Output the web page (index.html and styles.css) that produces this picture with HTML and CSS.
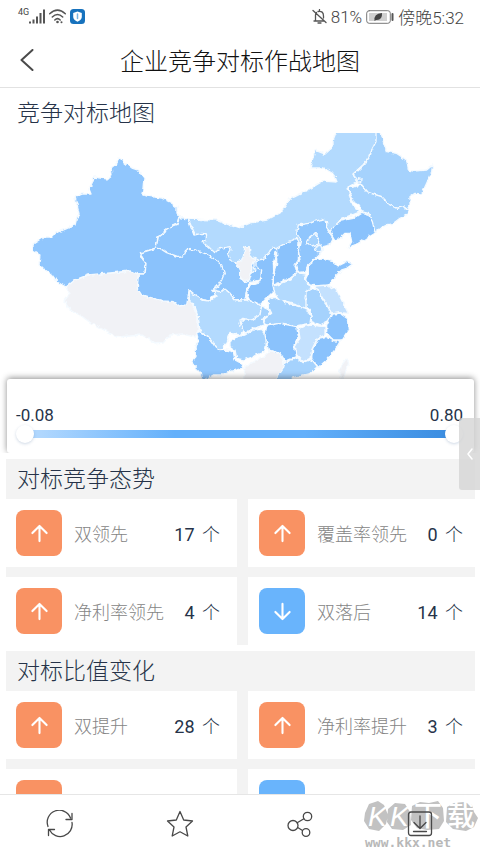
FILE: index.html
```html
<!DOCTYPE html>
<html lang="zh-CN">
<head>
<meta charset="utf-8">
<meta name="viewport" content="width=device-width, initial-scale=1">
<title>企业竞争对标作战地图</title>
<link rel="stylesheet" href="styles.css">
</head>
<body>
<svg class="defs" aria-hidden="true">
  <symbol id="up" viewBox="0 0 20 20"><path d="M10 18V2.500M2.500 9.500 10 2 17.500 9.500"/></symbol>
  <symbol id="down" viewBox="0 0 20 20"><path d="M10 2V17.500M2.500 10.500 10 18 17.500 10.500"/></symbol>
</svg>

<div class="status">
  <div class="status-group">
    <span class="net">4G</span>
    <svg class="signal" viewBox="0 0 16 15"><path d="M1 12.500V14.500M4.500 10.500V14.500M8 7.500V14.500M11.500 4V14.500M15 0.500V14.500"/></svg>
    <svg class="wifi" viewBox="0 0 17 15"><path d="M.7 4.800Q8.500-2.600 16.300 4.800M3.300 8Q8.500 3 13.700 8M5.800 11Q8.500 8.300 11.200 11"/><circle cx="8.500" cy="13" r="1.300"/><circle cx="12.500" cy="13.300" r="1"/></svg>
    <svg class="guard" viewBox="0 0 15 15"><rect width="15" height="15" rx="3.500" fill="#1772bd"/><path d="M7.500 2.500 11.800 4V8Q11.500 11 7.500 12.800 3.500 11 3.200 8V4Z" fill="#fff"/><path d="M7.500 5V9.500" stroke="#78b5e5" stroke-width="1.500"/></svg>
  </div>
  <div class="status-group">
    <svg class="bell" viewBox="0 0 15 15"><path d="M1 1.500 14 13.500M2 12H11.500M3.500 12V6Q3.500 4.500 4.500 3.500M6 2.500Q11.500 1.500 11.500 7V9M6 14H9M7.500 .5V2"/></svg>
    <span>81%</span>
    <svg class="battery" viewBox="0 0 28 14"><rect x=".7" y=".7" width="23.600" height="12.600" rx="2.500" fill="none" stroke="#777"/><rect x="3" y="3" width="18" height="8" fill="#d0d0d0"/><path d="M8.500 11Q7.500 3.500 16 3 16.500 10.500 10 10Z" fill="#444"/><path d="M26.500 4V10" stroke="#555" stroke-width="2"/></svg>
    <span>傍晚5:32</span>
  </div>
</div>

<header class="topbar">
  <button class="back" aria-label="返回"><svg viewBox="0 0 14 22"><path d="M12.500 1 1.500 11 12.500 21"/></svg></button>
  <h1>企业竞争对标作战地图</h1>
</header>

<main class="content">
  <section class="map-section">
    <h2 class="map-title">竞争对标地图</h2>
    <svg class="map" viewBox="0 133 480 246" role="img" aria-label="竞争对标地图">
      <filter id="coast" x="0" y="0" width="1" height="1">
        <feTurbulence type="fractalNoise" baseFrequency=".22" numOctaves="2" seed="4"/>
        <feDisplacementMap in="SourceGraphic" scale="4" xChannelSelector="R" yChannelSelector="G"/>
      </filter>
      <g filter="url(#coast)">
        <rect y="133" width="480" height="246" fill="#fff"/>
        <path class="none" d="M66 287 75 280 88 275 110 273 130 271 145 274 188 290 192 303 198 317 198 332 195 337 183 334 170 335 163 343 155 344 150 340 142 335 130 336 118 337 104 330 91 323 80 315 70 310 64 301 69 295Z"/>
        <path class="t2" d="M188 219 217 220 227 224 238 228 250 223 267 220 280 213 290 199 302 193 313 187 323 181 337 182 335 177 332 173 323 168 310 168 315 150 325 154 333 147 333 140 337 130H377V142L372 150 370 157 363 165 353 174 357 182 348 187 350 197 353 205 360 212 340 220 333 232 320 245 290 250 270 262 245 280 200 245Z"/>
        <path class="t4" d="M119 157 124 162 132 168 138 170 144 178 143 190 142 194 147 196 162 198 170 202 177 207 177 213 180 217 178 224 173 226 163 233 158 237 156 248 142 253 141 257 146 263 144 270 145 274 138 274 130 271 110 273 88 275 75 280 66 287 57 282 52 275 44 269 39 264 40 255 33 251 33 244 42 238 50 238 54 234 63 230 75 225 77 217 79 214 77 205 75 197 82 194 91 194 89 189 92 183 94 177 107 179 112 175 111 168 117 163Z"/>
        <g transform="translate(130 200) scale(.33333)">
          <path class="t4" d="M150 52 175 58 182 80 192 105 215 100 230 102 228 120 215 125 235 140 255 158 270 145 300 140 303 150 293 165 300 180 320 188 330 210 330 235 345 243 375 210 365 195 375 175 395 185 395 240 355 248 350 270 345 298 315 300 300 280 285 268 265 290 220 240 78 145 85 110 100 98 128 78 145 72Z"/>
          <path class="t5" d="M78 145 90 145 110 158 130 165 150 172 163 165 170 148 200 150 230 163 250 175 275 195 283 220 275 240 262 260 245 270 258 285 245 290 240 303 220 300 195 285 178 270 170 315 145 318 130 305 100 303 60 292 35 285 22 265 25 222 45 222 48 190 32 170 35 158Z"/>
          <path class="none" d="M345 140H358L360 165 375 180 365 200V215L358 240 342 245 330 230 328 205 315 188 335 180 342 160Z"/>
          <path class="t2" d="M178 270 195 285 220 300 240 303 258 290 250 270 270 275 285 268 300 280 315 300 345 300 370 305 395 318 390 345 365 362 340 355 330 370 340 390 330 405 300 400 290 430 270 452 255 440 235 410 210 395 205 350 195 320 178 300Z"/>
          <path class="t3" d="M395 318 420 330 415 350 395 355 405 375 370 385 345 400 335 380 330 360 365 360 390 345Z"/>
          <path class="t4" d="M200 398 210 395 235 410 255 440 270 452 290 450 310 455 315 480 330 488 340 505 300 515 280 525 250 525 225 540 215 535 210 515 190 495 185 485 198 470 195 440 205 425Z"/>
          <path class="t3" d="M300 425 320 410 345 405 370 390 395 388 410 405 408 440 405 455 370 468 340 480 320 475 315 450 300 440Z"/>
        </g>
        <g transform="translate(290 125) scale(.33333)">
          <path class="t3" d="M258 20H272L280 50 290 80 320 85 350 105 355 135 370 138 410 135 428 120 425 140 412 170 395 207 375 205 360 215V240L355 255 340 245 320 250 300 240 275 215 235 203 215 180 200 170 190 148 220 120 240 95 245 75 258 50Z"/>
          <path class="t3" d="M215 180 235 203 275 215 300 240 320 250 340 245 355 258 350 270 330 280 310 295 290 300 270 310 255 322 245 290 235 265 215 260 208 240 190 230 178 200V188Z"/>
          <path class="t5" d="M215 262 235 268 247 290 255 322 235 335 205 355 175 368 185 350 180 325 165 325 150 340 135 345 120 320 130 305 150 288 190 280Z"/>
          <path class="line" d="M200 170 203 158 213 160 212 170 202 172"/>
        </g>
        <g transform="translate(230 210) scale(.33333)">
          <path class="none" d="M40 515 45 470 100 440 120 422 150 430 165 470 145 515Z"/>
          <path class="t5" d="M130 110 140 120 130 160 132 200 128 225 135 240 110 265 90 285 60 270 50 250 60 225 90 215 95 180 75 170V155L100 150Z"/>
          <path class="t5" d="M200 85 207 95 205 150 195 165 200 190 180 205 130 225V190L140 160V115L165 100Z"/>
          <path class="t4" d="M205 45 235 40 275 28 290 35V55L310 85 300 105 280 110 275 125 250 150 225 185 205 187 200 165 210 150 205 120 212 90 200 70Z"/>
          <path class="t3" d="M240 80 255 70 268 85 265 102 245 108 230 98ZM262 108 272 105 277 122 262 128 257 118Z"/>
          <path class="t5" d="M235 165 260 145 290 150 310 155 325 168 350 155 368 162 350 175 335 180 310 205 295 225 270 230 240 225 225 210 235 190Z"/>
          <path class="t2" d="M130 230 180 210 200 188 225 192 228 215 245 235 228 245 225 265 232 280 228 295 200 285 165 275 145 270 132 245Z"/>
          <path class="t1" d="M255 228 295 225 320 240 330 260 345 290 355 310 330 308 305 312 290 285 275 260 262 240Z"/>
          <path class="t3" d="M228 245 245 235 265 240 275 265 290 285 305 310 300 330 270 345 245 335 240 300 228 290V265Z"/>
          <path class="t3" d="M115 265 135 262 165 278 200 287 228 295 243 320 240 340 200 348 160 340 110 345 100 330 125 310 115 290Z"/>
          <path class="t5" d="M305 312 330 310 352 325 355 360 335 390 310 390 290 370V345Z"/>
          <path class="t5" d="M310 392 330 395 315 420 290 450 265 472 245 445 248 415 265 385 290 380Z"/>
          <path class="t1" d="M205 355 240 345 285 350V375L262 385 245 420 240 445 220 455 200 435 195 405 210 385Z"/>
          <path class="t5" d="M110 348 150 340 200 350 205 380 192 405 200 440 165 455 150 430 115 420 105 375Z"/>
          <path class="t3" d="M165 458 200 442 220 458 245 448 262 470 240 490 200 500 165 512H135L160 475Z"/>
          <path class="none" d="M350 445 356 460 345 490 338 508 328 490 335 465Z"/>
        </g>
      </g>
    </svg>
    <div class="range-wrap">
      <div class="range-card">
        <div class="range-labels"><label for="low">-0.08</label><label for="high">0.80</label></div>
        <div class="range">
          <input id="low" type="range" min="-0.08" max="0.8" step="0.01" value="-0.08">
          <input id="high" type="range" min="-0.08" max="0.8" step="0.01" value="0.8">
        </div>
      </div>
    </div>
  </section>

  <section class="panel">
    <h2>对标竞争态势</h2>
    <div class="cards">
      <div class="card"><span class="tile"><svg><use href="#up"/></svg></span><span class="name">双领先</span><span class="value">17 <i>个</i></span></div>
      <div class="card"><span class="tile"><svg><use href="#up"/></svg></span><span class="name">覆盖率领先</span><span class="value">0 <i>个</i></span></div>
      <div class="card"><span class="tile"><svg><use href="#up"/></svg></span><span class="name">净利率领先</span><span class="value">4 <i>个</i></span></div>
      <div class="card"><span class="tile falling"><svg><use href="#down"/></svg></span><span class="name">双落后</span><span class="value">14 <i>个</i></span></div>
    </div>
  </section>

  <section class="panel">
    <h2>对标比值变化</h2>
    <div class="cards">
      <div class="card"><span class="tile"><svg><use href="#up"/></svg></span><span class="name">双提升</span><span class="value">28 <i>个</i></span></div>
      <div class="card"><span class="tile"><svg><use href="#up"/></svg></span><span class="name">净利率提升</span><span class="value">3 <i>个</i></span></div>
      <div class="card"><span class="tile"></span></div>
      <div class="card"><span class="tile falling"></span></div>
    </div>
  </section>
</main>

<button class="drawer" aria-label="展开"><svg viewBox="0 0 6 12"><path d="M5 1 1 6 5 11"/></svg></button>

<footer class="toolbar">
  <button aria-label="刷新"><svg viewBox="0 0 28 28"><path d="M2 16.500A12 12 0 0 1 24.500 8M26 3.500V9.500H20M26 12.500A12 12 0 0 1 3.500 20M2.500 25.500V19.500H8.500"/></svg></button>
  <button aria-label="收藏"><svg viewBox="0 0 28 28"><path d="M14 1.500 17.700 10 26.500 11 20 17 21.800 26 14 21.800 6.200 26 8 17 1.500 11 10.300 10Z"/></svg></button>
  <button aria-label="分享"><svg viewBox="0 0 28 28"><circle cx="7" cy="15.500" r="5"/><circle cx="21.500" cy="6.500" r="4.200"/><circle cx="20" cy="22.500" r="3.800"/><path d="M11.200 12.700 17.900 8.700M11.700 17.500 16.500 20.500"/></svg></button>
  <button class="download" aria-label="下载"><svg viewBox="0 0 28 28"><rect x="2.500" y="2" width="23" height="23.500" rx="2.500"/><path d="M14 6V18M8 12.500 14 18.500 20 12.500M7.500 21.500H20.500"/></svg></button>
  <div class="watermark">
    <svg viewBox="0 0 116 34">
      <path d="M2 13 6 4 15 1 21 5 25 15 23 24 16 31 6 29 1 21ZM25 9 32 3 42 4 47 12 48 25 40 30 29 29 24 22ZM49 6 57 2 66 3 75 1 80 8 81 21 76 29 64 30 54 28 48 20ZM84 7 91 3 101 2 109 5 111 12 115 18 111 27 103 31 90 29 83 22Z"/>
      <text x="5" y="26" class="latin">K</text><text x="27" y="26" class="latin">K</text><text x="51" y="26">下</text><text x="84" y="26">载</text>
    </svg>
    <span>www.kkx.net</span>
  </div>
</footer>
</body>
</html>
```

FILE: styles.css
```css
* {
  box-sizing: border-box;
}

body {
  margin: 0;
  height: 100vh;
  display: flex;
  flex-direction: column;
  overflow: hidden;
  position: relative;
  background: #fff;
  color: #263349;
  font-family: Roboto, "Noto Sans CJK SC", sans-serif;
  font-weight: 300;
}

h1,
h2 {
  margin: 0;
  font-weight: 300;
}

button {
  border: 0;
  padding: 0;
  background: none;
}

svg {
  display: block;
  fill: none;
  stroke-linecap: round;
  stroke-linejoin: round;
}

.defs {
  position: absolute;
  width: 0;
  height: 0;
}

/* Status bar */
.status {
  flex: none;
  height: 33px;
  padding: 0 16px 0 18px;
  display: flex;
  justify-content: space-between;
  color: #444;
  font-size: 17px;
}

.status-group {
  display: flex;
  align-items: center;
  gap: 4px;
}

.net {
  align-self: flex-start;
  margin: 8px -4px 0 0;
  font-size: 9px;
  line-height: 8px;
  font-weight: 400;
}

.signal {
  width: 16px;
  height: 15px;
  stroke: #555;
  stroke-width: 2;
}

.signal path {
  stroke-linecap: butt;
}

.wifi {
  width: 17px;
  height: 15px;
  stroke: #555;
  stroke-width: 1.5;
}

.wifi circle {
  fill: #555;
  stroke: none;
}

.guard {
  width: 15px;
  height: 15px;
}

.bell {
  width: 15px;
  height: 15px;
  stroke: #555;
  stroke-width: 1.3;
}

.battery {
  width: 28px;
  height: 14px;
}

/* Title bar */
.topbar {
  flex: none;
  height: 55px;
  padding: 0 20px;
  display: grid;
  grid-template-columns: 20px 1fr 20px;
  align-items: center;
  border-bottom: 1px solid #e2e2e2;
  color: #111;
}

.topbar h1 {
  padding-top: 3px;
  font-size: 24px;
  line-height: 36px;
  text-align: center;
}

.back svg {
  width: 14px;
  height: 22px;
  stroke: #4a4a4a;
  stroke-width: 2;
}

/* Page content */
.content {
  flex: 1;
  min-height: 0;
  overflow: hidden;
}

.content h2 {
  height: 40px;
  padding: 2px 0 0 11px;
  font-size: 23px;
  line-height: 38px;
}

.content .map-title {
  height: 45px;
  padding: 7px 0 0 17px;
}

.map {
  width: 100%;
  height: auto;
}

.map path {
  stroke: #f4faff;
  stroke-width: 4;
}

.map filter + g > path {
  stroke-width: 1.4;
}

.map .t1 { fill: #c4e1fe; }
.map .t2 { fill: #b3dafe; }
.map .t3 { fill: #a5d2fd; }
.map .t4 { fill: #90c6fd; }
.map .t5 { fill: #8ac2fc; }
.map .none { fill: #f1f2f6; }
.map .line { fill: none; }

.range-wrap {
  margin-top: -8px;
  padding: 8px 6px 0 7px;
  height: 88px;
  overflow: hidden;
  position: relative;
}

.range-card {
  height: 74px;
  padding: 26px 11px 0 9px;
  border-radius: 3px;
  background: #fff;
  box-shadow: 0 -1px 6px rgba(0, 0, 0, 0.45);
  clip-path: inset(-8px -8px 0 -8px);
}

.range-labels {
  display: flex;
  justify-content: space-between;
  font-size: 17px;
  line-height: 20px;
  font-weight: 400;
}

.range {
  display: grid;
  align-items: center;
  height: 18px;
  background: linear-gradient(90deg, #b0d7fe 4%, #63b0fb 35%, #63b0fb 65%, #3d8fe2 96%) center / calc(100% - 16px) 8px no-repeat;
}

.range input {
  grid-area: 1 / 1;
  width: 100%;
  height: 18px;
  margin: 0;
  appearance: none;
  background: none;
  pointer-events: none;
}

.range input::-webkit-slider-thumb {
  appearance: none;
  width: 18px;
  height: 18px;
  border-radius: 50%;
  background: #fff;
  box-shadow: 0 1px 3px rgba(60, 100, 150, 0.25);
  pointer-events: auto;
}

/* Indicator panels */
.panel {
  margin: 0 5px 6px 6px;
  background: #f3f3f3;
}

.cards {
  display: grid;
  grid-template-columns: 231fr 227fr;
  gap: 10px 11px;
}

.card {
  display: flex;
  align-items: center;
  height: 68px;
  padding: 0 17px 0 10px;
  background: #fff;
  font-size: 18px;
}

.card:nth-child(even) {
  padding: 0 12px 0 11px;
}

.tile {
  width: 46px;
  height: 46px;
  margin-right: 12px;
  border-radius: 8px;
  display: grid;
  place-items: center;
  background: #f99263;
}

.falling {
  background: #69b4fc;
}

.tile svg {
  width: 19px;
  height: 19px;
  stroke: #fff;
  stroke-width: 2.2;
}

.name {
  color: #858585;
}

.value {
  margin-left: auto;
  font-weight: 400;
}

.value i {
  margin-left: 3px;
  font-style: normal;
  font-weight: 300;
}

.drawer {
  position: absolute;
  right: 0;
  top: 418px;
  width: 21px;
  height: 72px;
  display: grid;
  place-items: center;
  border-radius: 3px 0 0 3px;
  background: rgba(212, 212, 212, 0.8);
}

.drawer svg {
  width: 6px;
  height: 12px;
  stroke: #fff;
  stroke-width: 1.5;
}

/* Bottom toolbar */
.toolbar {
  flex: none;
  height: 59px;
  display: grid;
  grid-template-columns: repeat(4, 1fr);
  position: relative;
  border-top: 1px solid #e6e6e6;
  background: #fff;
}

.toolbar button {
  display: grid;
  place-items: center;
}

.toolbar button svg {
  width: 28px;
  height: 28px;
  stroke: #484848;
  stroke-width: 1.3;
}

.download {
  position: relative;
  z-index: 1;
}

.watermark {
  position: absolute;
  right: 1px;
  bottom: 1px;
  width: 116px;
  color: #b8b8b8;
}

.watermark svg {
  width: 116px;
  height: 34px;
  overflow: visible;
}

.watermark path {
  fill: #c2c2c2;
}

.watermark text {
  fill: #fff;
  font-family: "Noto Sans CJK SC", sans-serif;
  font-size: 28px;
  font-weight: 500;
}

.watermark .latin {
  font-family: "Liberation Sans", sans-serif;
  font-style: italic;
}

.watermark span {
  display: block;
  padding-left: 2px;
  font: bold 13px/18px "DejaVu Sans Mono", monospace;
}
```
